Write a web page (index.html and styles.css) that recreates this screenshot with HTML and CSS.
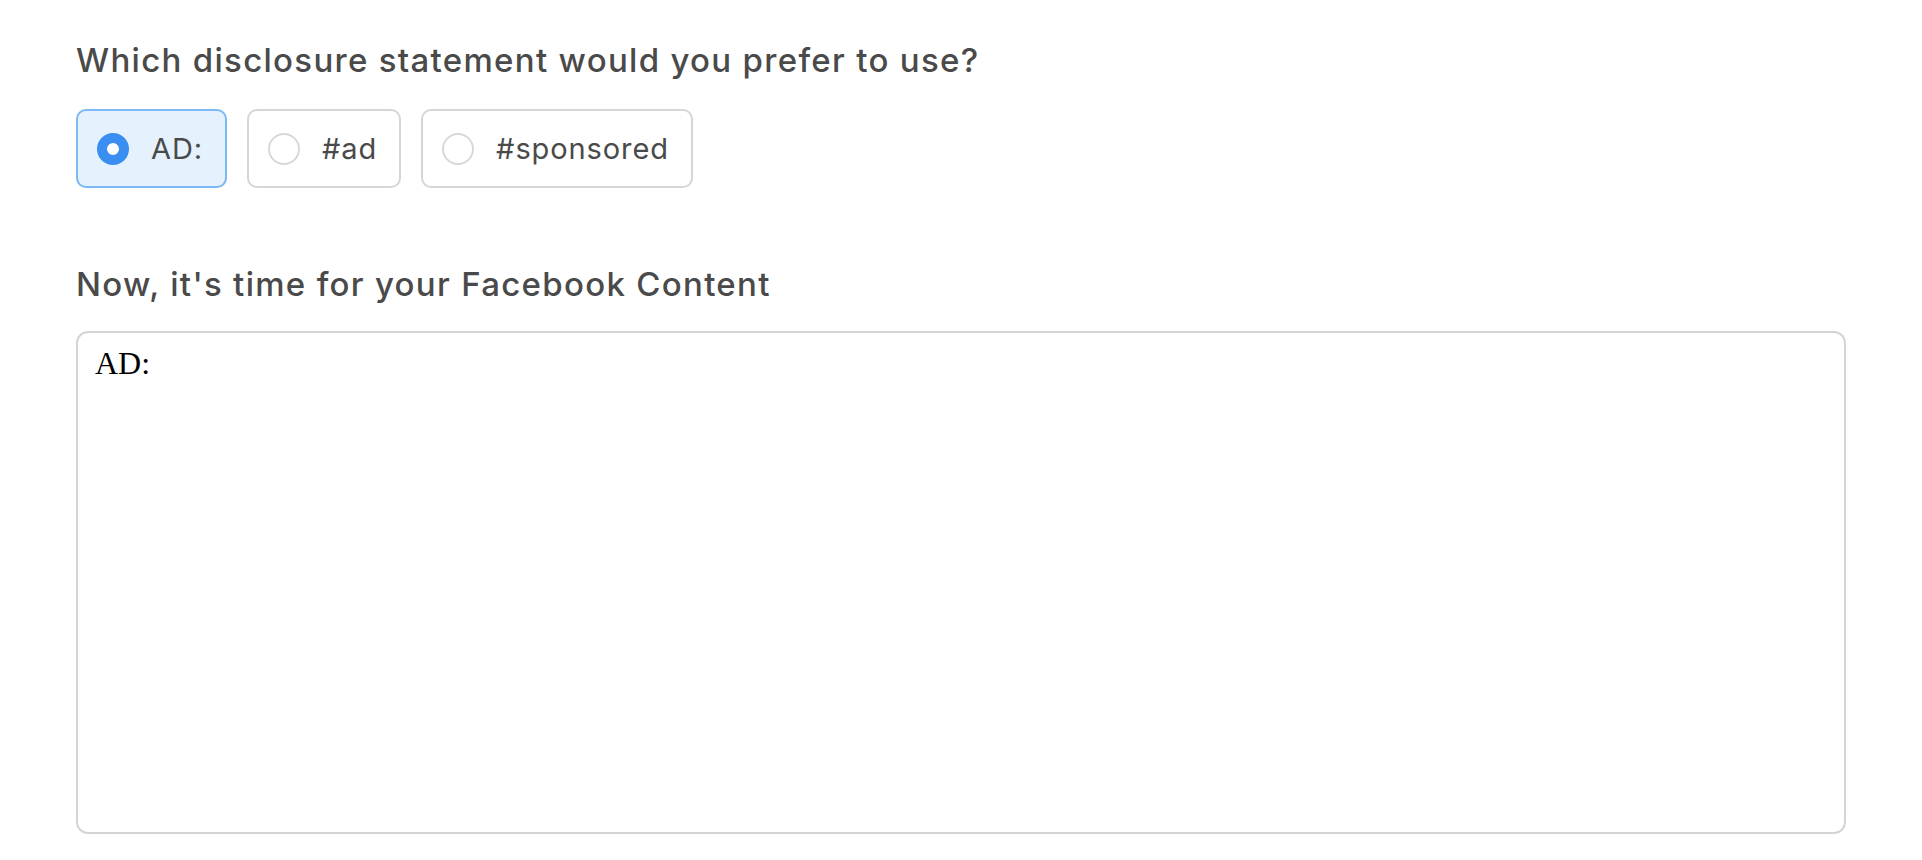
FILE: index.html
```html
<!DOCTYPE html>
<html lang="en">
<head>
  <meta charset="UTF-8" />
  <title>Disclosure</title>
  <link rel="stylesheet" href="styles.css">
</head>
<body>
  <main class="form">
    <h2 class="question">Which disclosure statement would you prefer to use?</h2>
    <div class="options">
      <label class="option selected">
        <input type="radio" name="disclosure" value="AD:" checked>
        <span>AD:</span>
      </label>
      <label class="option">
        <input type="radio" name="disclosure" value="#ad">
        <span>#ad</span>
      </label>
      <label class="option">
        <input type="radio" name="disclosure" value="#sponsored">
        <span>#sponsored</span>
      </label>
    </div>

    <h2 class="question second">Now, it's time for your Facebook Content</h2>
    <textarea class="content">AD: </textarea>
  </main>
</body>
</html>
```

FILE: styles.css
```css
body {
  margin: 0;
  background: #ffffff;
  font-family: Inter, "Noto Sans", Arial, sans-serif;
  color: #4a4a4a;
}
.form {
  padding: 40px 76px 26px 76px;
  display: flex;
  flex-direction: column;
}
.question {
  margin: 0;
  font-size: 33px;
  line-height: 40px;
  font-weight: 500;
  letter-spacing: 1.3px;
}
.question.second {
  margin-top: 76px;
}
.options {
  display: flex;
  gap: 20px;
  margin-top: 29px;
}
.option {
  display: flex;
  align-items: center;
  gap: 22px;
  height: 79px;
  box-sizing: border-box;
  padding: 0 22px 0 19px;
  border: 2px solid #d6d6d6;
  border-radius: 10px;
  font-size: 29px;
  letter-spacing: 0.9px;
  cursor: pointer;
}
.option.selected {
  background: #e5f1fd;
  border-color: #7bb9f6;
}
.option input {
  appearance: none;
  margin: 0;
  width: 32px;
  height: 32px;
  border: 2px solid #d8d8d8;
  border-radius: 50%;
  background: #fff;
  box-sizing: border-box;
}
.option input:checked {
  border: 10px solid #3a8ef1;
  background: #fff;
}
.content {
  margin-top: 27px;
  height: 503px;
  box-sizing: border-box;
  border: 2px solid #d4d4d4;
  border-radius: 12px;
  padding: 12px 17px;
  font-family: "Liberation Serif", "Times New Roman", serif;
  font-size: 32px;
  color: #000;
  resize: none;
  outline: none;
}
```
